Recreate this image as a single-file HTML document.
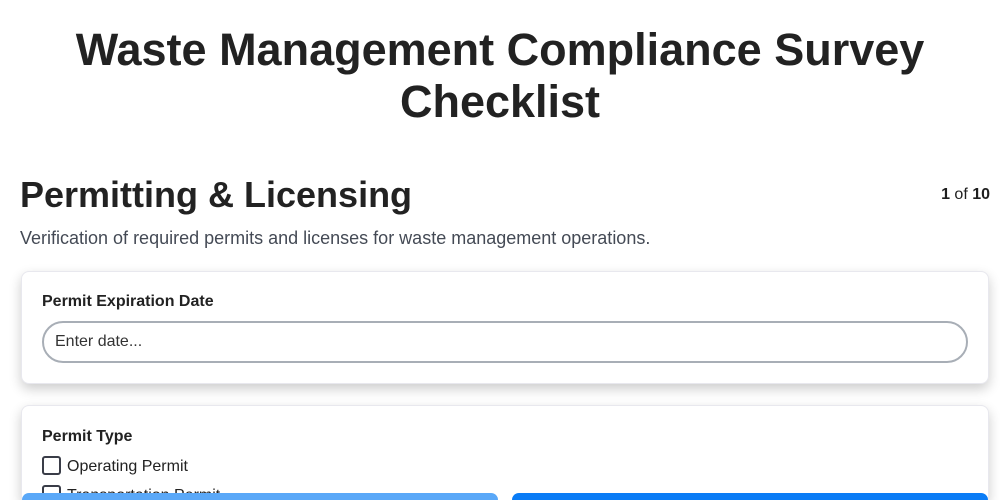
<!DOCTYPE html>
<html style="height:500px;overflow:hidden"><head><style>
*{box-sizing:border-box}
body{margin:0;width:1000px;height:500px;overflow:hidden;background:#fff;font-family:"Liberation Sans",sans-serif;color:#1f1f1f;position:relative}
h1{margin:0;position:absolute;top:24px;left:0;width:1000px;text-align:center;font-size:45px;line-height:52px;font-weight:700;color:#222}
h2{margin:0;position:absolute;top:174px;left:20px;font-size:36px;line-height:42px;font-weight:700;color:#222}
.pg{position:absolute;top:186px;right:10px;font-size:16px}
.desc{position:absolute;top:228px;left:20px;font-size:18px;color:#444a55}
.card{position:absolute;left:21px;width:968px;background:#fff;border:1px solid #e8e8ee;border-radius:8px;box-shadow:0 5px 12px rgba(0,0,0,.2)}
.lbl{position:absolute;left:20px;font-size:16px;font-weight:700;color:#222}
.inp{position:absolute;left:20px;top:49px;width:926px;height:42px;border:2px solid #a8aeb6;border-radius:21px;padding-left:11px;line-height:38px;font-size:16px;color:#333}
.cb{position:absolute;left:20px;font-size:16px;color:#222}
.cb i{display:inline-block;width:19px;height:19px;border:2px solid #3a3d48;border-radius:3px;vertical-align:-4px;margin-right:6px}
.btn{position:absolute;top:493px;height:40px;border-radius:20px}
</style></head><body>
<h1>Waste Management Compliance Survey<br>Checklist</h1>
<h2>Permitting &amp; Licensing</h2>
<div class="pg"><b>1</b> of <b>10</b></div>
<div class="desc">Verification of required permits and licenses for waste management operations.</div>
<div class="card" style="top:271px;height:113px">
<div class="lbl" style="top:21px">Permit Expiration Date</div>
<div class="inp">Enter date...</div>
</div>
<div class="card" style="top:405px;height:95px;border-bottom:none;border-radius:8px 8px 0 0">
<div class="lbl" style="top:22px">Permit Type</div>
<div class="cb" style="top:50px"><i></i>Operating Permit</div>
<div class="cb" style="top:79px"><i></i>Transportation Permit</div>
</div>
<div class="btn" style="left:22px;width:476px;background:#5aa8f8;height:7px;border-radius:20px 20px 0 0"></div>
<div class="btn" style="left:512px;width:476px;background:#0a7cf6;height:7px;border-radius:20px 20px 0 0"></div>
</body></html>
